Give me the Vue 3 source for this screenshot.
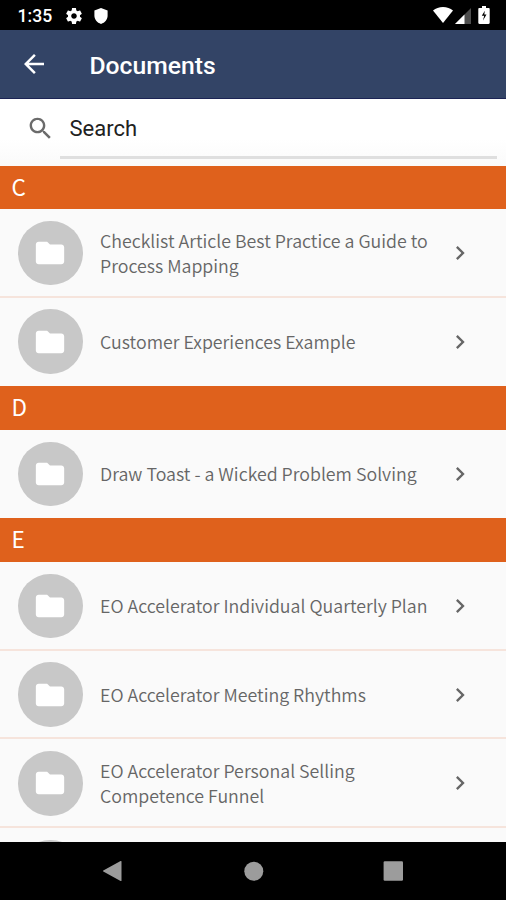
<template>
  <div class="wrap">
    <!-- status bar -->
    <div class="status_bar">
      <span class="time">1:35</span>
      <svg class="gear" viewBox="2 2 20 20">
        <path
          d="M19.43 12.98c.04-.32.07-.64.07-.98s-.03-.66-.07-.98l2.11-1.65c.19-.15.24-.42.12-.64l-2-3.46c-.12-.22-.39-.3-.61-.22l-2.49 1c-.52-.4-1.08-.73-1.69-.98l-.38-2.65C14.46 2.18 14.25 2 14 2h-4c-.25 0-.46.18-.49.42l-.38 2.65c-.61.25-1.17.59-1.69.98l-2.49-1c-.23-.09-.49 0-.61.22l-2 3.46c-.13.22-.07.49.12.64l2.11 1.65c-.04.32-.07.65-.07.98s.03.66.07.98l-2.11 1.65c-.19.15-.24.42-.12.64l2 3.46c.12.22.39.3.61.22l2.49-1c.52.4 1.08.73 1.69.98l.38 2.65c.03.24.24.42.49.42h4c.25 0 .46-.18.49-.42l.38-2.65c.61-.25 1.17-.59 1.69-.98l2.49 1c.23.09.49 0 .61-.22l2-3.46c.12-.22.07-.49-.12-.64l-2.11-1.65zM12 15.5c-1.93 0-3.5-1.57-3.5-3.5s1.57-3.5 3.5-3.5 3.5 1.57 3.5 3.5-1.57 3.5-3.5 3.5z"
        />
      </svg>
      <svg class="shield" viewBox="0 0 14 16">
        <path d="M7 0l6.6 2.4v5.1c0 3.9-2.6 7.2-6.6 8.4C3 14.7.4 11.4.4 7.5V2.4z" />
      </svg>
      <div class="status_right">
        <svg class="wifi" viewBox="0 0 20 16">
          <path d="M10 16L0 3.5C2.7 1.3 6.2 0 10 0s7.3 1.3 10 3.5z" />
        </svg>
        <svg class="signal" viewBox="0 0 16 16">
          <path d="M16 0v16H0z" fill-opacity=".3" />
          <path d="M9.5 6.5V16H0z" />
        </svg>
        <svg class="battery" viewBox="0 0 12 18">
          <path
            fill-rule="evenodd"
            d="M4 0h4v2h2.5c.8 0 1.2.5 1.2 1.2v13.6c0 .7-.4 1.2-1.2 1.2h-9c-.8 0-1.2-.5-1.2-1.2V3.2C.3 2.5.7 2 1.5 2H4zM6.8 4.8L3.8 9.8h2.4L5 14.6l3.5-6H6.3z"
          />
        </svg>
      </div>
    </div>
    <header>
      <button class="back_btn" aria-label="Back">
        <svg viewBox="0 0 24 24">
          <path d="M20 11H7.83l5.59-5.59L12 4l-8 8 8 8 1.41-1.41L7.83 13H20v-2z" />
        </svg>
      </button>
      <h1>Documents</h1>
    </header>
    <div class="search_bar">
      <svg viewBox="0 0 24 24">
        <path
          d="M15.5 14h-.79l-.28-.27C15.41 12.59 16 11.11 16 9.5 16 5.91 13.09 3 9.5 3S3 5.91 3 9.5 5.91 16 9.5 16c1.61 0 3.09-.59 4.23-1.57l.27.28v.79l5 4.99L20.49 19l-4.99-5zm-6 0C7.01 14 5 11.99 5 9.5S7.01 5 9.5 5 14 7.01 14 9.5 11.99 14 9.5 14z"
        />
      </svg>
      <input v-model="keyword" class="search_input" type="text" placeholder="Search" />
    </div>
    <!-- document list -->
    <main class="list">
      <section v-for="group in filteredGroups" :key="group.letter">
        <h2 class="letter">{{ group.letter }}</h2>
        <div v-for="(doc, index) in group.docs" :key="index" class="row">
          <div class="avatar">
            <svg viewBox="0 0 24 24">
              <path
                d="M10 4H4c-1.1 0-1.99.9-1.99 2L2 18c0 1.1.9 2 2 2h16c1.1 0 2-.9 2-2V8c0-1.1-.9-2-2-2h-8l-2-2z"
              />
            </svg>
          </div>
          <p class="doc_name">{{ doc }}</p>
          <svg class="chevron" viewBox="0 0 24 24">
            <path d="M10 6L8.59 7.41 13.17 12l-4.58 4.59L10 18l6-6z" />
          </svg>
        </div>
      </section>
    </main>
    <!-- system navigation -->
    <nav>
      <svg viewBox="0 0 20 20">
        <path d="M19.5.6v18.8a.6.6 0 0 1-.9.5L1.3 10.5a.6.6 0 0 1 0-1L18.6.1a.6.6 0 0 1 .9.5z" />
      </svg>
      <svg viewBox="0 0 20 20"><circle cx="10.8" cy="10.2" r="9.5" /></svg>
      <svg viewBox="0 0 20 20">
        <rect x="-.4" y=".3" width="19.4" height="19.4" rx="1.2" />
      </svg>
    </nav>
  </div>
</template>
<script setup>
import { computed, ref } from 'vue';

const keyword = ref('');
const groups = [
  {
    letter: 'C',
    docs: [
      'Checklist Article Best Practice a Guide to Process Mapping',
      'Customer Experiences Example',
    ],
  },
  { letter: 'D', docs: ['Draw Toast - a Wicked Problem Solving'] },
  {
    letter: 'E',
    docs: [
      'EO Accelerator Individual Quarterly Plan',
      'EO Accelerator Meeting Rhythms',
      'EO Accelerator Personal Selling Competence Funnel',
      '',
    ],
  },
];

// filter by name, hide letters with no match
const filteredGroups = computed(() =>
  groups
    .map((group) => ({
      ...group,
      docs: group.docs.filter((doc) =>
        doc.toLowerCase().includes(keyword.value.toLowerCase())
      ),
    }))
    .filter((group) => group.docs.length > 0)
);
</script>
<style>
body {
  margin: 0;
  background-color: #000000;
}
</style>
<style scoped>
* {
  box-sizing: border-box;
  margin: 0;
  padding: 0;
}
svg {
  display: block;
  flex-shrink: 0;
  fill: currentColor;
  overflow: visible;
}
.wrap {
  width: 100%;
  height: 900px;
  display: flex;
  flex-direction: column;
  overflow: hidden;
  background-color: #fafafa;
  font-family: Roboto, sans-serif;
}
/* status bar */
.status_bar {
  flex-shrink: 0;
  height: 29.5px;
  padding: 0 16px 0 17.5px;
  display: flex;
  align-items: center;
  background-color: #000000;
  color: #ffffff;
}
.time {
  width: 48px;
  padding-top: 2px;
  font-size: 17.6px;
  font-weight: 500;
  line-height: 30px;
}
.gear {
  width: 16px;
  height: 16px;
  margin-top: 2px;
}
.shield {
  width: 14px;
  height: 16px;
  margin: 2px 0 0 12.5px;
}
.status_right {
  margin-left: auto;
  display: flex;
  align-items: center;
}
.wifi {
  width: 20px;
  height: 16px;
}
.signal {
  width: 16px;
  height: 16px;
  margin: 2px 7px 0 2px;
}
.battery {
  width: 12px;
  height: 18px;
}
/* header */
header {
  flex-shrink: 0;
  height: 69px;
  padding-left: 19px;
  display: flex;
  align-items: center;
  background-color: #334466;
  border-bottom: 1px solid #1c2455;
  color: #ffffff;
}
.back_btn {
  border: none;
  background: none;
  color: #ffffff;
}
.back_btn svg {
  width: 30px;
  height: 30px;
}
h1 {
  margin-left: 40.5px;
  padding-top: 5px;
  font-size: 24.7px;
  font-weight: 500;
  line-height: 30px;
}
/* search */
.search_bar {
  flex-shrink: 0;
  height: 67px;
  padding: 0 9.5px 7px 25.5px;
  display: flex;
  align-items: center;
  background: linear-gradient(#ffffff 60%, #fafafa);
  color: #6b6b6b;
}
.search_bar svg {
  width: 29px;
  height: 29px;
}
.search_input {
  flex: 1;
  min-width: 0;
  height: 60px;
  margin-left: 5.5px;
  padding: 2px 9.5px 0;
  border: none;
  border-bottom: 3px solid #dfdfdf;
  outline: none;
  background: none;
  color: #212121;
  font-family: inherit;
  font-size: 22px;
}
.search_input::placeholder {
  color: #212121;
  opacity: 1;
}
/* list */
.list {
  flex: 1;
  min-height: 0;
  overflow: hidden;
  font-family: 'Noto Sans CJK JP', sans-serif;
}
.letter {
  height: 43.6px;
  padding-left: 11.5px;
  background-color: #df611c;
  color: #ffffff;
  font-size: 22.5px;
  font-weight: 400;
  line-height: 41.4px;
}
.row {
  height: 88.6px;
  padding: 1.5px 32.5px 0 18px;
  display: flex;
  align-items: center;
  border-bottom: 2px solid #f6e4dc;
}
.row:last-child {
  border-bottom-color: transparent;
}
.avatar {
  flex-shrink: 0;
  width: 64.5px;
  height: 64.5px;
  border-radius: 50%;
  display: flex;
  align-items: center;
  justify-content: center;
  background-color: #c8c8c8;
  color: #ffffff;
}
.avatar svg {
  width: 34px;
  height: 34px;
}
.doc_name {
  flex: 1;
  margin: -1px 10px 0 17.5px;
  color: #666666;
  font-family: 'Noto Sans CJK JP DemiLight', 'Noto Sans CJK JP', sans-serif;
  font-size: 17.8px;
  font-weight: 350;
  line-height: 24.4px;
}
.chevron {
  width: 28px;
  height: 28px;
  color: #666666;
}
/* navigation */
nav {
  flex-shrink: 0;
  height: 58px;
  padding: 0 102px;
  display: flex;
  align-items: center;
  justify-content: space-between;
  background-color: #000000;
  color: #9c9c9c;
}
nav svg {
  width: 20px;
  height: 20px;
}
</style>
